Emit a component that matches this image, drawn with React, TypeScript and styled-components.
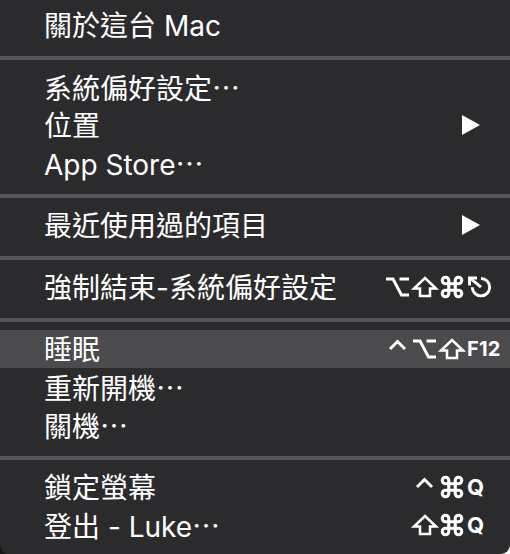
import React from "react";
import styled, { createGlobalStyle } from "styled-components";

const GlobalStyle = createGlobalStyle`
  html, body {
    margin: 0;
    padding: 0;
    background: linear-gradient(to right, #161617 50%, #ffffff 50%);
  }
  #root { width: 510px; }
`;

const Menu = styled.div`
  width: 510px;
  height: 554px;
  box-sizing: border-box;
  padding: 6px 0 10px;
  background: #2b2b2d;
  border-radius: 0 0 9px 9px;
  overflow: hidden;
  color: #ffffff;
  font-family: Inter, "Noto Sans CJK TC", sans-serif;
`;

const Row = styled.div<{ $active?: boolean }>`
  height: 38px;
  display: flex;
  align-items: center;
  padding-left: 44px;
  background: ${(p) => (p.$active ? "#4b4b4d" : "transparent")};
`;

const Label = styled.span`
  flex: 1;
  font-size: 28px;
  line-height: 38px;
  font-weight: 400;
  white-space: nowrap;
  padding-top: 1px;
`;

const Dots = styled.span`
  display: inline-block;
  font-family: "Noto Sans CJK TC", sans-serif;
  font-variant-east-asian: full-width;
`;

const Separator = styled.div`
  padding: 12px 0 8px;
  &::before {
    content: "";
    display: block;
    height: 4px;
    background: #565658;
  }
`;

const Arrow = styled.svg`
  width: 18px;
  height: 20px;
  margin-right: 30px;
  flex: none;
`;

const Shortcut = styled.div`
  display: flex;
  align-items: center;
  gap: 3px;
`;

const Mod = styled.svg`
  width: 24px;
  height: 20px;
  flex: none;
  fill: none;
  stroke: #ffffff;
  stroke-width: 2.9;
  overflow: visible;
`;

const Key = styled.div`
  width: 43px;
  display: flex;
  align-items: center;
  font-family: Inter, sans-serif;
  font-weight: 700;
  font-size: 22px;
  line-height: 20px;
`;

const SmallKey = styled.span`
  font-size: 20px;
  letter-spacing: 0.2px;
`;

const Option = () => (
  <Mod viewBox="0 0 24 20">
    <path d="M0 2H7L15.5 18H23M13.5 2H23" strokeLinejoin="miter" />
  </Mod>
);

const Shift = () => (
  <Mod viewBox="0 0 24 20" style={{ strokeWidth: 2.5 }}>
    <path d="M12 1L23 11.5H17V19H7V11.5H1Z" strokeLinejoin="miter" />
  </Mod>
);

const Command = () => (
  <Mod viewBox="0 0 24 20">
    <path
      transform="translate(12,10) scale(1.08) translate(-12,-12)"
      d="M15 6v12a3 3 0 1 0 3-3H6a3 3 0 1 0 3 3V6a3 3 0 1 0-3 3h12a3 3 0 1 0-3-3"
    />
  </Mod>
);

const Control = () => (
  <Mod viewBox="0 0 24 20">
    <path d="M4 10L11.5 2.5L19 10" />
  </Mod>
);

const Escape = () => (
  <Mod viewBox="0 0 24 20">
    <path d="M14 1.5A8.7 8.7 0 1 1 5.3 10.2" />
    <path d="M14 10.2L3.5 1.5" />
    <path d="M2.5 8.5V1H10" strokeLinejoin="miter" />
  </Mod>
);

const SubArrow = () => (
  <Arrow viewBox="0 0 18 20">
    <polygon points="0,0 18,10 0,20" fill="#ffffff" />
  </Arrow>
);

type Item = {
  label: React.ReactNode;
  active?: boolean;
  sub?: boolean;
  mods?: React.ReactNode;
  keyCap?: React.ReactNode;
};

const E = () => <Dots lang="zh-Hant">…</Dots>;

const groups: Item[][] = [
  [{ label: "關於這台 Mac" }],
  [
    { label: <>系統偏好設定<E /></> },
    { label: "位置", sub: true },
    { label: <>App Store<E /></> },
  ],
  [{ label: "最近使用過的項目", sub: true }],
  [
    {
      label: "強制結束-系統偏好設定",
      mods: (
        <>
          <Option />
          <Shift />
          <Command />
        </>
      ),
      keyCap: <Escape />,
    },
  ],
  [
    {
      label: "睡眠",
      active: true,
      mods: (
        <>
          <Control />
          <Option />
          <Shift />
        </>
      ),
      keyCap: <SmallKey>F12</SmallKey>,
    },
    { label: <>重新開機<E /></> },
    { label: <>關機<E /></> },
  ],
  [
    {
      label: "鎖定螢幕",
      mods: (
        <>
          <Control />
          <Command />
        </>
      ),
      keyCap: "Q",
    },
    {
      label: <>登出 - Luke<E /></>,
      mods: (
        <>
          <Shift />
          <Command />
        </>
      ),
      keyCap: "Q",
    },
  ],
];

export default function App() {
  return (
    <>
      <GlobalStyle />
      <Menu lang="zh-Hant">
        {groups.map((g, gi) => (
          <React.Fragment key={gi}>
            {gi > 0 && <Separator />}
            {g.map((it, i) => (
              <Row key={i} $active={it.active}>
                <Label>{it.label}</Label>
                {it.sub && <SubArrow />}
                {it.keyCap && (
                  <Shortcut>
                    {it.mods}
                    <Key>{it.keyCap}</Key>
                  </Shortcut>
                )}
              </Row>
            ))}
          </React.Fragment>
        ))}
      </Menu>
    </>
  );
}
